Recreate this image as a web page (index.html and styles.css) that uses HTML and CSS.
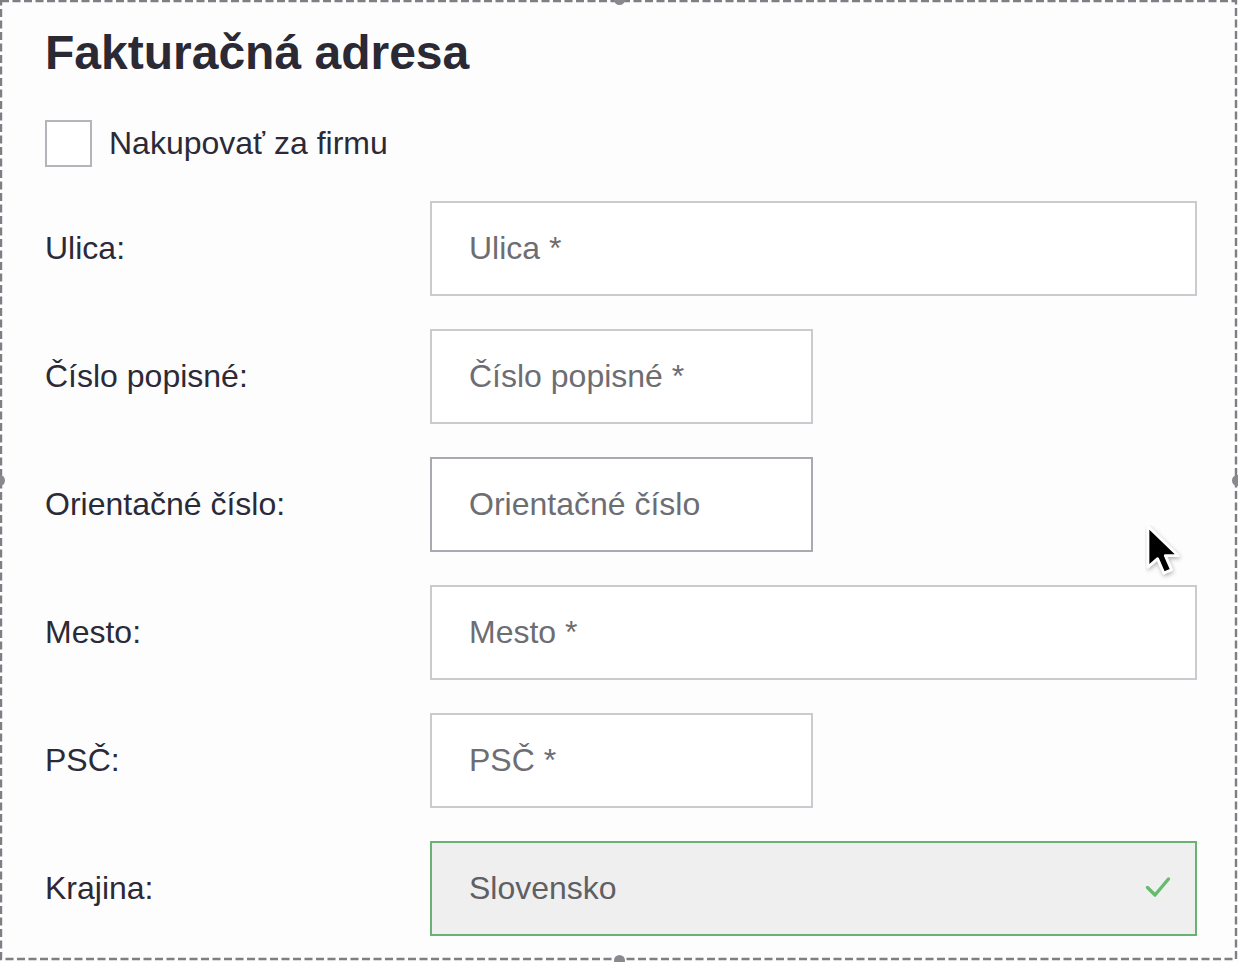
FILE: index.html
```html
<!DOCTYPE html>
<html lang="sk">
<head>
<meta charset="utf-8">
<title>Fakturačná adresa</title>
<link rel="stylesheet" href="styles.css">
</head>
<body>
<div class="frame">
  <svg class="frame-border" width="1238" height="961" viewBox="0 0 1238 961">
    <rect x="1" y="1" width="1235" height="958" fill="none" stroke="#7f7f83" stroke-width="2.4" stroke-dasharray="8 3.5"/>
  </svg>
  <span class="handle h-top"></span>
  <span class="handle h-left"></span>
  <span class="handle h-right"></span>
  <span class="handle h-bottom"></span>

  <h1 class="title">Fakturačná adresa</h1>

  <label class="check-row">
    <span class="checkbox"></span>
    <span class="check-label">Nakupovať za firmu</span>
  </label>

  <div class="form">
    <div class="label">Ulica:</div>
    <input class="field wide" type="text" placeholder="Ulica *">

    <div class="label">Číslo popisné:</div>
    <input class="field short" type="text" placeholder="Číslo popisné *">

    <div class="label">Orientačné číslo:</div>
    <input class="field short hover" type="text" placeholder="Orientačné číslo">

    <div class="label">Mesto:</div>
    <input class="field wide" type="text" placeholder="Mesto *">

    <div class="label">PSČ:</div>
    <input class="field short" type="text" placeholder="PSČ *">

    <div class="label">Krajina:</div>
    <div class="field wide select valid">
      <span class="select-value">Slovensko</span>
      <svg class="check-icon" width="26" height="22" viewBox="0 0 26 22">
        <path d="M2.5 11.5 L10 19 L23.5 3" fill="none" stroke="#66bb6f" stroke-width="3.4" stroke-linecap="round" stroke-linejoin="round"/>
      </svg>
    </div>
  </div>

  <svg class="cursor" width="51" height="66" viewBox="0 0 34 44">
    <defs>
      <filter id="sh" x="-30%" y="-30%" width="160%" height="160%">
        <feDropShadow dx="0.5" dy="1.2" stdDeviation="1.3" flood-color="#000" flood-opacity="0.3"/>
      </filter>
    </defs>
    <path d="M2 1 L2 28 L8.4 22.4 L12.6 32 L17.6 29.8 L13.5 20.4 L22 20.4 Z" fill="#000" stroke="#fff" stroke-width="1.8" stroke-linejoin="round" filter="url(#sh)"/>
  </svg>
</div>
</body>
</html>
```

FILE: styles.css
```css
html, body {
  margin: 0;
  padding: 0;
  background: #fdfdfe;
}

body {
  font-family: "Liberation Sans", Arial, Helvetica, sans-serif;
  color: #2b2a36;
}

.frame {
  position: relative;
  width: 1238px;
  height: 962px;
  box-sizing: border-box;
  padding: 29px 41px 0 45px;
  overflow: hidden;
}

.frame-border {
  position: absolute;
  left: 0;
  top: 0;
  pointer-events: none;
}

.handle {
  position: absolute;
  width: 11px;
  height: 11px;
  border-radius: 50%;
  background: #8a8a8e;
}
.h-top { left: 614px; top: -6px; }
.h-bottom { left: 614px; top: 955px; }
.h-left { left: -6px; top: 475px; }
.h-right { left: 1232px; top: 475px; }

.title {
  margin: 0;
  font-size: 48px;
  line-height: 48px;
  font-weight: 700;
  color: #2a2934;
  letter-spacing: 0;
}

.check-row {
  margin-top: 43px;
  height: 47px;
  display: flex;
  align-items: center;
  gap: 17px;
}

.checkbox {
  width: 47px;
  height: 47px;
  box-sizing: border-box;
  border: 2px solid #b4b4bb;
  background: #fff;
  flex: none;
}

.check-label {
  font-size: 32px;
  color: #2b2a36;
}

.form {
  margin-top: 34px;
  display: grid;
  grid-template-columns: 385px 767px;
  row-gap: 33px;
  align-items: center;
}

.label {
  font-size: 32px;
  color: #2b2a36;
}

.field {
  height: 95px;
  box-sizing: border-box;
  border: 2px solid #cacacf;
  background: #fff;
  padding: 0 0 0 37px;
  font-family: "Liberation Sans", Arial, Helvetica, sans-serif;
  font-size: 32px;
  color: #6d6d72;
  outline: none;
  margin: 0;
  border-radius: 0;
}
.field::placeholder {
  color: #6d6d72;
  opacity: 1;
}

.wide { width: 767px; }
.short { width: 383px; }

.hover { border-color: #a9a9b1; }

.select {
  display: flex;
  align-items: center;
  justify-content: space-between;
  padding-right: 24px;
}

.valid {
  border-color: #6ab273;
  background: #efeff0;
}

.select-value {
  color: #5f5f64;
}

.check-icon {
  display: block;
  margin-top: -3px;
}

.cursor {
  position: absolute;
  left: 1145px;
  top: 525px;
  pointer-events: none;
}
```
